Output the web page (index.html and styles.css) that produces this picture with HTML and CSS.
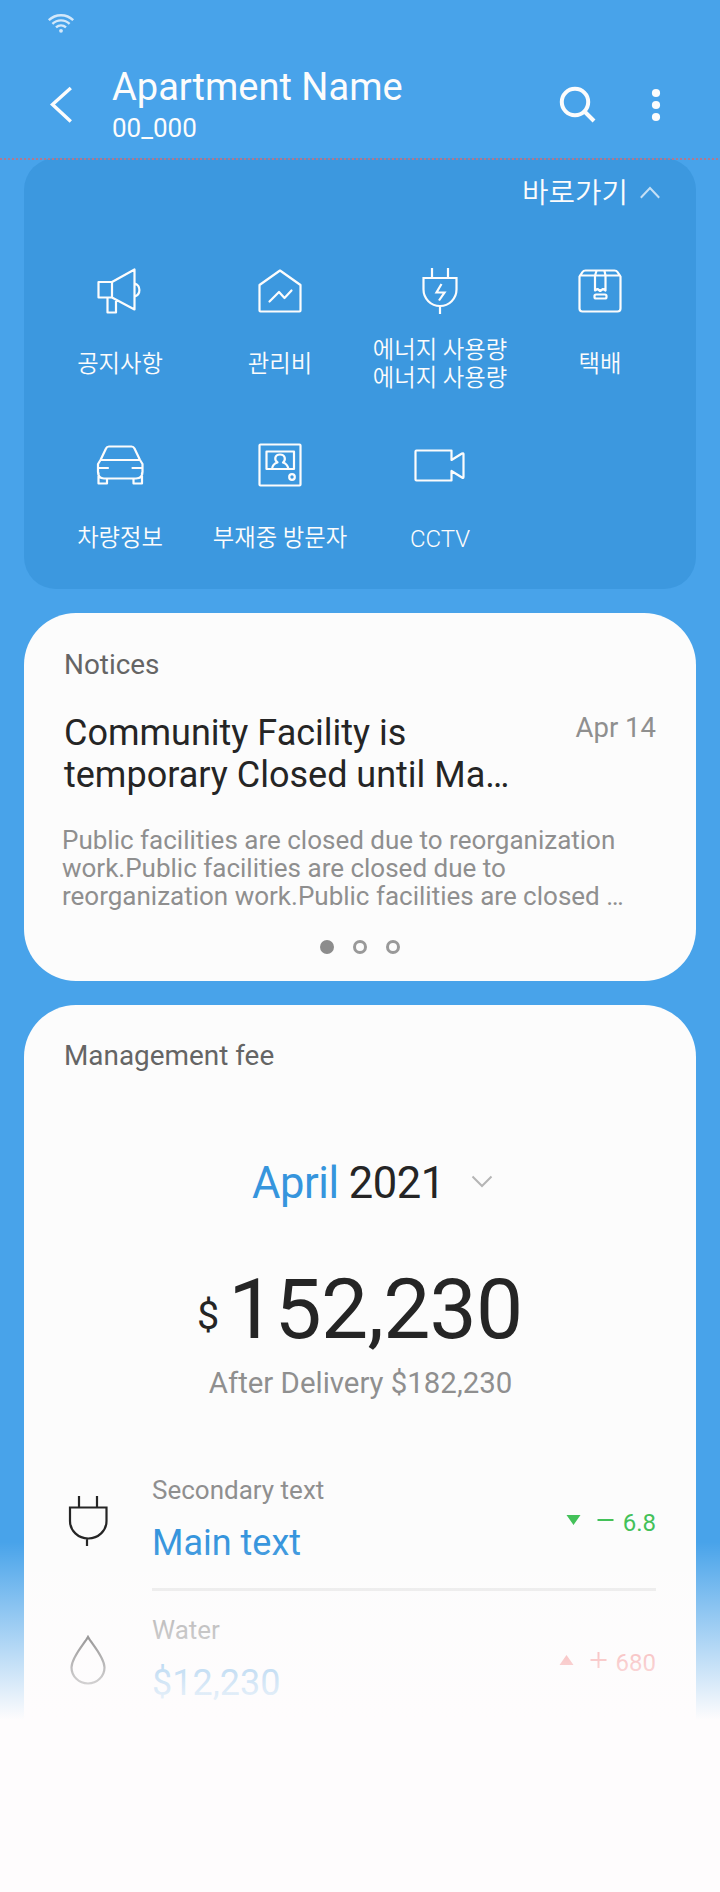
FILE: index.html
```html
<!DOCTYPE html>
<html lang="ko">
<head>
<meta charset="utf-8">
<title>Apartment Name</title>
<link rel="stylesheet" href="styles.css">
</head>
<body>
<div class="screen">
  <div class="status">
    <svg width="28" height="22" viewBox="0 0 28 22" fill="none" stroke="#d3e8fa" stroke-width="2.4">
      <path d="M1.800 8.200C8.500 1.500 19.500 1.500 26.200 8.200M5.400 11.800C10.200 7.200 17.800 7.200 22.600 11.800M9 15.400C11.900 12.800 16.100 12.800 19 15.400"/>
      <circle cx="14" cy="18.800" r="1.900" fill="#d3e8fa" stroke="none"/>
    </svg>
  </div>
  <header class="appbar">
    <svg class="back" width="24" height="38" viewBox="0 0 24 38" fill="none" stroke="#fcfcfc" stroke-width="3.400"><path d="M21.800 2L3.500 18.500L21.800 35.500"/></svg>
    <div class="heading">
      <h1 class="title">Apartment Name</h1>
      <p class="subtitle">00_000</p>
    </div>
    <svg class="search" width="38" height="38" viewBox="0 0 38 38" fill="none" stroke="#fcfcfc" stroke-width="4"><circle cx="16" cy="16" r="13.200"/><path d="M25.500 25.500L35 35"/></svg>
    <svg class="more" width="10" height="34" viewBox="0 0 10 34" fill="#fcfcfc"><circle cx="5" cy="5" r="4.100"/><circle cx="5" cy="17" r="4.100"/><circle cx="5" cy="29" r="4.100"/></svg>
  </header>
  <div class="guide"></div>

  <section class="quick">
    <div class="quick-head"><span>바로가기</span>
      <svg width="20" height="13" viewBox="0 0 20 13" fill="none" stroke="#c4dff5" stroke-width="2"><path d="M.8 11.800L10 2L19.200 11.800"/></svg>
    </div>
    <div class="quick-grid">
      <div class="item"><svg class="icon" viewBox="0 0 56 56"><path d="M6.500 19H20V34.500H6.500ZM20 19L42.500 6.500V46.500L20 34.500M15.500 34.500V49.500H24V36.500M43 20.500A7 7 0 0 1 43 33.500"/></svg><div class="label">공지사항</div></div>
      <div class="item"><svg class="icon" viewBox="0 0 56 56"><path d="M7.500 22L28 7.500L48.500 22V47.500Q48.500 48.500 47.500 48.500H8.500Q7.500 48.500 7.500 47.500ZM17.500 38.500L27 29L32.500 35L39.500 27.500"/></svg><div class="label">관리비</div></div>
      <div class="item"><svg class="icon sharp" viewBox="0 0 56 56"><path d="M20 5V15M36 5V15M11.500 15H44.500V26.500A16.500 16.500 0 0 1 11.500 26.500ZM28 43V51M29.500 21L24.500 29.500H32.500L27 37.500"/></svg><div class="label">에너지 사용량<br>에너지 사용량</div></div>
      <div class="item"><svg class="icon" viewBox="0 0 56 56"><path d="M7.500 13.500L10.500 9Q11.500 7.500 13.500 7.500H42.500Q44.500 7.500 45.500 9L48.500 13.500V45.500Q48.500 48.500 45.500 48.500H10.500Q7.500 48.500 7.500 45.500ZM8 12.500H48M24.500 8L23 12.500V27.500L25.500 26L28.200 28L31 26L33.500 27.500V12.500L32.500 8"/><rect x="22.500" y="31.500" width="12" height="4" rx="1.500"/></svg><div class="label">택배</div></div>
      <div class="item"><svg class="icon" viewBox="0 0 56 56"><path d="M14 10.500Q14.800 8.500 17 8.500H39.500Q41.500 8.500 42.500 10.500L48 22L50.500 26V34Q50.500 40.500 44 40.500H12Q6 40.500 6 34V26L8.500 22ZM9 22H48M7 30H16M40.500 30H50M6.500 35V45.500H15V41M50 35V45.500H41.500V41"/></svg><div class="label">차량정보</div></div>
      <div class="item"><svg class="icon" viewBox="0 0 56 56"><rect x="7.500" y="6.500" width="41" height="41" rx="1"/><path d="M14.500 13.500H42V31H14.500ZM20 31Q20.500 26 25.500 24.500C22 22 22.500 16.500 28 16.500S34 22 31 24.500Q35.500 26 36.500 31"/><circle cx="40" cy="39" r="2.800"/></svg><div class="label">부재중 방문자</div></div>
      <div class="item"><svg class="icon" viewBox="0 0 56 56"><path d="M4.500 12.500H39.500V22L50 15.500Q51.500 14.800 51.500 16V39Q51.500 40.500 50 39.500L39.500 33V42.500H4.500Q3.500 42.500 3.500 41.500V13.500Q3.500 12.500 4.500 12.500Z"/></svg><div class="label latin">CCTV</div></div>
    </div>
  </section>

  <section class="card notices">
    <h2 class="card-title">Notices</h2>
    <div class="notice-head">
      <h3 class="notice-title">Community Facility is<br>temporary Closed until Ma…</h3>
      <time class="date">Apr 14</time>
    </div>
    <p class="notice-body">Public facilities are closed due to reorganization<br>work.Public facilities are closed due to<br>reorganization work.Public facilities are closed …</p>
    <div class="pager"><i class="dot on"></i><i class="dot"></i><i class="dot"></i></div>
  </section>

  <section class="card fee">
    <h2 class="card-title">Management fee</h2>
    <div class="month"><span class="accent">April</span><span>2021</span>
      <svg width="22" height="14" viewBox="0 0 22 14" fill="none" stroke="#b5b5b5" stroke-width="2"><path d="M1.500 1.500L11 11L20.500 1.500"/></svg>
    </div>
    <div class="amount"><span class="currency">$</span><span class="sum">152,230</span></div>
    <p class="after">After Delivery $182,230</p>
    <div class="row">
      <svg class="row-icon" width="40" height="52" viewBox="0 0 40 52" fill="none" stroke="#252525" stroke-width="2.200"><path d="M11 1V12M29 1V12M2 12.500H38.500V26A18.250 17.500 0 0 1 2 26ZM19 43.500V51"/></svg>
      <div class="row-main">
        <div class="row-text"><div class="name">Secondary text</div><div class="value">Main text</div></div>
        <div class="delta down"><svg width="48" height="20" viewBox="0 0 48 20"><path d="M.5 5H14.500L7.500 15ZM31.500 9H47.500V11H31.500Z" fill="#43c159"/></svg><span>6.8</span></div>
      </div>
    </div>
    <div class="row last">
      <svg class="row-icon" width="40" height="52" viewBox="0 0 40 52" fill="none" stroke="#252525" stroke-width="2.200"><path d="M20 2C16.500 8.500 3.500 22 3.500 32.500A16.500 16 0 0 0 36.500 32.500C36.500 22 23.500 8.500 20 2Z"/></svg>
      <div class="row-main">
        <div class="row-text"><div class="name">Water</div><div class="value">$12,230</div></div>
        <div class="delta up"><svg width="48" height="20" viewBox="0 0 48 20"><path d="M.5 15H14.500L7.500 5ZM31.500 9H38.500V2H40.500V9H47.500V11H40.500V18H38.500V11H31.500Z" fill="#ef6b6b"/></svg><span>680</span></div>
      </div>
    </div>
  </section>
  <div class="fade"></div>
</div>
</body>
</html>
```
FILE: styles.css
```css
* { box-sizing: border-box; }
body { margin: 0; font-family: Roboto, "Noto Sans CJK KR", sans-serif; }
h1, h2, h3, p { margin: 0; font-weight: 400; }
svg { display: block; flex: none; }
.screen {
  position: relative;
  width: 720px;
  height: 1892px;
  overflow: hidden;
  background: #48a3ea;
}
.status { height: 50px; padding: 12px 47px; }
.appbar {
  display: flex;
  align-items: flex-start;
  height: 108px;
  padding: 0 59px 0 49px;
  color: #fcfcfc;
}
.back { margin-top: 36px; }
.heading { flex: 1; margin-left: 39px; padding-top: 16px; }
.title { font-size: 38px; line-height: 42px; white-space: nowrap; }
.subtitle { margin-top: 5px; font-size: 26px; line-height: 30px; }
.search { margin: 36px 54px 0 0; }
.more { margin-top: 38px; }
.guide {
  position: absolute;
  z-index: 1;
  top: 158px;
  width: 720px;
  height: 2px;
  background: repeating-linear-gradient(90deg, #b1788f 0 2px, transparent 2px 4px);
}
.quick {
  height: 431px;
  margin: 0 24px 24px;
  padding: 16px 16px 0;
  border-radius: 32px;
  background: #3c98df;
  color: #fcfcfc;
}
.quick-head {
  display: flex;
  justify-content: flex-end;
  align-items: center;
  gap: 12px;
  height: 38px;
  padding-right: 20px;
  font-size: 28.800px;
  line-height: 38px;
  font-family: Roboto, "Noto Sans CJK KR DemiLight", "Noto Sans CJK KR", sans-serif;
  font-weight: 350;
}
.quick-head svg { margin-top: -2px; }
.quick-grid {
  display: grid;
  grid-template-columns: repeat(4, 160px);
  grid-auto-rows: 174.5px;
  padding-top: 51px;
}
.item { display: flex; flex-direction: column; align-items: center; }
.icon {
  width: 56px;
  height: 56px;
  fill: none;
  stroke: #fcfcfc;
  stroke-width: 2.200;
  stroke-linejoin: round;
  stroke-linecap: round;
}
.sharp { stroke-linejoin: miter; stroke-linecap: butt; }
.label {
  display: flex;
  align-items: center;
  height: 56px;
  margin-top: 16.500px;
  font-size: 23.300px;
  line-height: 28px;
  font-family: Roboto, "Noto Sans CJK KR DemiLight", "Noto Sans CJK KR", sans-serif;
  font-weight: 350;
  white-space: nowrap;
}
.latin { margin-top: 17.500px; font-size: 24px; font-weight: 300; }
.card {
  margin: 0 24px 24px;
  padding: 0 40px;
  border-radius: 52px;
  background: #fcfcfc;
  color: #252525;
}
.card-title { font-size: 27.900px; line-height: 32px; color: #656565; }
.notices { height: 368px; padding-top: 36px; }
.notice-head { display: flex; justify-content: space-between; margin-top: 31px; }
.notice-title { font-size: 36px; line-height: 42px; white-space: nowrap; }
.date { font-size: 27.500px; line-height: 32px; color: #8f8f8f; }
.notice-body {
  margin: 30px -20px 0 -2px;
  font-size: 26px;
  line-height: 28px;
  color: #8f8f8f;
  white-space: nowrap;
}
.pager { display: flex; justify-content: center; gap: 19px; margin-top: 30px; }
.dot { width: 14px; height: 14px; border: 3px solid #999; border-radius: 50%; }
.on { background: #8c8c8c; border-color: #8c8c8c; }
.fee { height: 900px; padding-top: 35px; }
.month {
  display: flex;
  align-items: center;
  gap: 10px;
  height: 52px;
  margin: 86px 0 0 188px;
  font-size: 43.500px;
  letter-spacing: -.4px;
  line-height: 52px;
}
.month svg { margin: -4px 0 0 16px; }
.accent { color: #3695dd; }
.amount { display: flex; align-items: baseline; height: 98px; margin: 51px 0 0 133px; line-height: 98px; }
.currency { font-size: 39.500px; position: relative; top: -9px; }
.sum { margin-left: 9px; font-size: 84px; letter-spacing: -.8px; }
.after { margin: 6px -1px 0 0; font-size: 29.400px; line-height: 36px; text-align: center; color: #8f8f8f; }
.row { display: flex; }
.row-icon { margin-top: 44px; margin-left: 4px; }
.row-main {
  flex: 1;
  display: flex;
  justify-content: space-between;
  align-items: center;
  height: 140px;
  margin-left: 44px;
  border-bottom: 3px solid #e8e8e8;
}
.after + .row { margin-top: 50px; }
.last .row-main { border-color: transparent; }
.name { font-size: 26px; line-height: 30px; color: #8f8f8f; }
.value { margin-top: 17px; font-size: 36px; line-height: 42px; color: #3695dd; }
.delta { display: flex; align-items: center; gap: 9px; padding-top: 6px; font-size: 24px; line-height: 28px; }
.delta svg { margin-top: -5px; }
.down { color: #43c159; }
.up { color: #ef6b6b; }
.fade {
  position: absolute;
  top: 1542px;
  bottom: 0;
  width: 720px;
  background: linear-gradient(rgba(254, 252, 253, 0), #fefcfd 178px);
}
```
